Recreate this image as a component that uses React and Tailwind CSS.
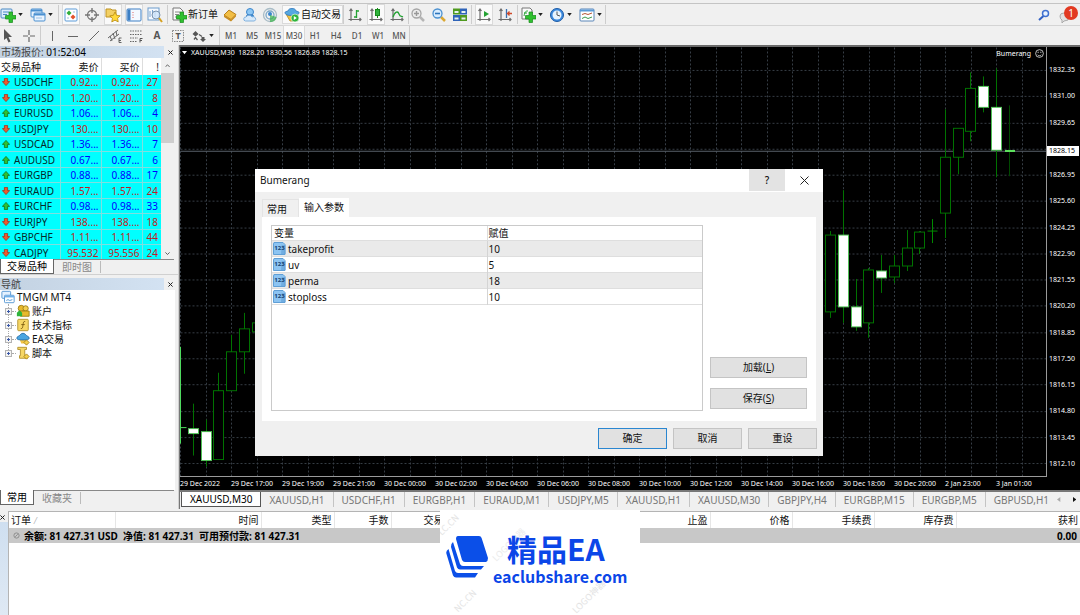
import React from "react";
import clsx from "clsx";

const quotes = [
  { symbol: "USDCHF", bid: "0.92...", ask: "0.92...", spread: 27, up: false },
  { symbol: "GBPUSD", bid: "1.20...", ask: "1.20...", spread: 8, up: false },
  { symbol: "EURUSD", bid: "1.06...", ask: "1.06...", spread: 4, up: true },
  { symbol: "USDJPY", bid: "130....", ask: "130....", spread: 10, up: false },
  { symbol: "USDCAD", bid: "1.36...", ask: "1.36...", spread: 7, up: true },
  { symbol: "AUDUSD", bid: "0.67...", ask: "0.67...", spread: 6, up: true },
  { symbol: "EURGBP", bid: "0.88...", ask: "0.88...", spread: 17, up: true },
  { symbol: "EURAUD", bid: "1.57...", ask: "1.57...", spread: 24, up: false },
  { symbol: "EURCHF", bid: "0.98...", ask: "0.98...", spread: 33, up: true },
  { symbol: "EURJPY", bid: "138....", ask: "138....", spread: 18, up: false },
  { symbol: "GBPCHF", bid: "1.11...", ask: "1.11...", spread: 44, up: false },
  { symbol: "CADJPY", bid: "95.532", ask: "95.556", spread: 24, up: false },
];

const prices = [
  "1832.35", "1831.00", "1829.65", "1828.30", "1826.95", "1825.60", "1824.25", "1822.90",
  "1821.55", "1820.20", "1818.85", "1817.50", "1816.15", "1814.80", "1813.45", "1812.10",
];

const times = [
  "29 Dec 2022", "29 Dec 17:00", "29 Dec 19:00", "29 Dec 21:00", "30 Dec 00:00", "30 Dec 02:00",
  "30 Dec 04:00", "30 Dec 06:00", "30 Dec 08:00", "30 Dec 10:00", "30 Dec 12:00", "30 Dec 14:00",
  "30 Dec 16:00", "30 Dec 18:00", "30 Dec 20:00", "2 Jan 23:00", "3 Jan 01:00",
];

const chartTabs = [
  "XAUUSD,M30", "XAUUSD,H1", "USDCHF,H1", "EURGBP,H1", "EURAUD,M1", "USDJPY,M5",
  "XAUUSD,H1", "XAUUSD,M30", "GBPJPY,H4", "EURGBP,M15", "EURGBP,M5", "GBPUSD,H1",
];

const timeframes = ["M1", "M5", "M15", "M30", "H1", "H4", "D1", "W1", "MN"];

const params = [
  { name: "takeprofit", value: "10" },
  { name: "uv", value: "5" },
  { name: "perma", value: "18" },
  { name: "stoploss", value: "10" },
];

// x, wick high, wick low, body top, body bottom, filled
const candles = [
  [193, 404, 456, 429, 434, true],
  [206, 420, 467, 432, 461, true],
  [218, 373, 460, 391, 460, false],
  [231, 335, 391, 352, 391, false],
  [244, 313, 374, 329, 352, false],
  [257, 323, 332, 323, 332, false],
  [830, 231, 318, 235, 312, false],
  [843, 190, 323, 235, 307, true],
  [856, 279, 331, 307, 327, true],
  [868, 268, 338, 270, 323, false],
  [881, 255, 293, 271, 278, true],
  [894, 255, 283, 266, 277, false],
  [907, 230, 271, 248, 266, false],
  [919, 231, 254, 232, 248, false],
  [932, 219, 243, 231, 231, false],
  [945, 109, 238, 157, 213, false],
  [958, 128, 174, 128, 157, false],
  [970, 72, 141, 88, 131, false],
  [983, 76, 112, 86, 107, true],
  [996, 68, 177, 107, 150, true],
];

const icon = (children) => (
  <svg viewBox="0 0 16 16" className="size-4 shrink-0" fill="none" aria-hidden="true">
    {children}
  </svg>
);

const plus = <path d="M9 5h3.500v3.500H16V12h-3.500v3.500H9V12H5.500V8.500H9z" fill="#2fc02f" stroke="#178a1b" strokeWidth=".7" />;
const axes = <path d="M4 2v12M1.500 12.500H14M2.500 4L4 2l1.500 2M12.500 11l1.500 1.500-1.500 1.500" stroke="#6b6b6b" strokeWidth="1.200" />;

const icons = {
  newChart: icon(<><rect x="1" y="2" width="11" height="9" rx="1" fill="#dcecfb" stroke="#4a8ac4" /><path d="M3 5h6M3 7.500h4" stroke="#4a8ac4" />{plus}</>),
  profiles: icon(<><rect x="1" y="2" width="11" height="8" rx="1" fill="#eaf4ff" stroke="#4a90d0" /><path d="M1 3.500h11" stroke="#4a90d0" strokeWidth="2" /><rect x="4" y="6" width="11" height="8" rx="1" fill="#eaf4ff" stroke="#4a90d0" /><path d="M4 7.500h11" stroke="#4a90d0" strokeWidth="2" /><path d="M6 11h6" stroke="#9bc0e4" /></>),
  market: icon(<><rect x="2" y="2" width="12" height="12" rx="1" fill="#fff" stroke="#5a9bd8" /><path d="M6 3.500l2.500 2.500L6 8.500 3.500 6z" fill="#2fae3a" /><path d="M10 7.500l2.500 2.500-2.500 2.500L7.500 10z" fill="#e2522c" /><path d="M10 5h2M4 11h2" stroke="#9bbbe0" /></>),
  crosshair: icon(<><circle cx="8" cy="8" r="4.500" stroke="#777" strokeWidth="1.300" /><path d="M8 1v5M8 10v5M1 8h5M10 8h5" stroke="#777" strokeWidth="1.400" /></>),
  navigator: icon(<><path d="M1 2h5l1 1h4v7H1z" fill="#f3d064" stroke="#bd9222" /><path d="M10 5l1.600 3.300 3.600.5-2.600 2.500.6 3.600-3.200-1.700-3.200 1.700.6-3.600-2.600-2.500 3.600-.5z" fill="#ffd83a" stroke="#b98a12" strokeWidth=".8" /></>),
  terminal: icon(<><rect x="1" y="2" width="14" height="12" rx="1" fill="#f4f9ff" stroke="#3c7fc4" /><rect x="1.500" y="2.500" width="3" height="11" fill="#3c7fc4" /><path d="M6.500 5.500h1M6.500 8h1M6.500 10.500h1" stroke="#d66" /></>),
  tester: icon(<><rect x="1" y="1" width="11" height="12" fill="#f4f9ff" stroke="#6c9ccc" /><path d="M3 4v6M5.500 3v6M8 5v5" stroke="#7aa4d0" /><circle cx="9" cy="8" r="4" fill="#cfe5fa" fillOpacity=".8" stroke="#7b93ad" /><path d="M12 11l3 4" stroke="#d5a021" strokeWidth="2" /></>),
  order: icon(<><path d="M2 1h7l3 3v9H2z" fill="#fafafa" stroke="#777" /><path d="M4 5h5M4 7.500h4M4 10h2" stroke="#888" />{plus}</>),
  editor: icon(<><path d="M2 8l5-5 7 4.500-5 5z" fill="#f2be45" stroke="#b9801a" /><path d="M2 8l7 4.500v2L2 10zM9 12.500l5-5v2l-5 5z" fill="#c88d22" /></>),
  community: icon(<><circle cx="8" cy="5" r="3.500" fill="#8ec7f4" stroke="#3c86cc" /><path d="M5 8h6l1 3H4z" fill="#5aa4e6" stroke="#2d75bb" /><path d="M3.500 14a2 2 0 0 1 .5-4 3.500 3.500 0 0 1 6 0 2 2 0 1 1 2.500 4z" fill="#d7e9fa" stroke="#6aa3d8" strokeWidth=".8" /></>),
  signals: icon(<><circle cx="8" cy="8" r="6.500" stroke="#a9bcc6" strokeWidth="1.300" /><circle cx="8" cy="8" r="4" stroke="#7fa9c8" strokeWidth="1.300" /><circle cx="8" cy="7" r="2" fill="#3c86cc" /><path d="M8 8v7c4 0 6-2 6.500-5z" fill="#39b24a" fillOpacity=".7" /></>),
  auto: icon(<><path d="M2 7c3 2 9 2 12 0l-3 7H6z" fill="#f2c343" stroke="#b98a1c" strokeWidth=".8" /><path d="M1 5.500c0-1 2-1 3-1.500.5-2 2-2.500 4-2.500s3.500.5 4 2.500c1 .5 3 .5 3 1.500C15 8 11 8.500 8 8.500S1 8 1 5.500z" fill="#56a8e0" stroke="#2d75bb" strokeWidth=".8" /><circle cx="11" cy="11" r="4" fill="#2fb43c" stroke="#fff" strokeWidth=".6" /><path d="M9.800 9l3 2-3 2z" fill="#fff" /></>),
  bars: icon(<>{axes}<path d="M9.500 3v8M9.500 4h2.500M7 10h2.500" stroke="#24a233" strokeWidth="1.300" /></>),
  candle: icon(<>{axes}<path d="M9.500 1v10" stroke="#178a1b" /><rect x="7.500" y="2.500" width="4" height="6" fill="#2fb43c" stroke="#178a1b" /></>),
  line: icon(<>{axes}<path d="M4 10c2-6 5-6 6-3s2 2 4 3" stroke="#24a233" strokeWidth="1.300" /></>),
  zoomIn: icon(<><path d="M10 10l4 4" stroke="#b5b5b5" strokeWidth="2.500" /><circle cx="6.500" cy="6.500" r="4.500" fill="#ececec" stroke="#a5a5a5" strokeWidth="1.300" /><path d="M4 6.500h5M6.500 4v5" stroke="#999" strokeWidth="1.400" /></>),
  zoomOut: icon(<><path d="M10 10l4 4" stroke="#dba832" strokeWidth="2.500" /><circle cx="6.500" cy="6.500" r="4.500" fill="#d9edff" stroke="#4a90d0" strokeWidth="1.300" /><path d="M4 6.500h5" stroke="#2d75bb" strokeWidth="1.600" /></>),
  tile: icon(<><path d="M1 1.500h7v6H1zM8 8h7v6H8z" fill="#4f9a1e" /><path d="M8 1.500h7v6H8zM1 8h7v6H1z" fill="#2e63b8" /><path d="M2.500 4h4v2h-4zM9.500 4h4v2h-4zM2.500 10.500h4v2h-4zM9.500 10.500h4v2h-4z" fill="#e6f2ee" /></>),
  scroll: icon(<>{axes}<path d="M8 4l5 3-5 3z" fill="#24a233" /></>),
  shift: icon(<>{axes}<path d="M9.500 2v9" stroke="#3a6fb0" strokeWidth="1.300" /><path d="M15 6.500h-4m1.500-2l-2 2 2 2" stroke="#d04a2a" strokeWidth="1.300" /></>),
  indicators: icon(<><path d="M2 1h8l2 2v9H2z" fill="#fafafa" stroke="#777" /><path d="M4 9c1-5 2-5 4-5M4 6h3" stroke="#24a233" />{plus}</>),
  clock: icon(<><circle cx="8" cy="8" r="6.500" fill="#3d8be0" stroke="#1d5ba6" /><circle cx="8" cy="8" r="4.500" fill="#e9f4ff" /><path d="M8 4.500V8l3 1" stroke="#555" /></>),
  template: icon(<><rect x="1" y="2" width="14" height="12" rx="1" fill="#fff" stroke="#5a86b8" /><path d="M1 3.500h14" stroke="#5a9bd8" strokeWidth="2" /><path d="M3 7.500l3-1 3 1 4-1.500" stroke="#b55434" /><path d="M3 11.500l3-1.500 3 1.500 4-1.500" stroke="#3a9a4c" /></>),
  cursor: icon(<path d="M4 1l8 8H8.500l2 4.500-2 .9-2-4.500L4 12z" fill="#555" />),
  cross: icon(<path d="M8 2v5M8 9v5M2 8h5M9 8h5" stroke="#666" strokeWidth="1.200" />),
  vline: icon(<path d="M8.500 3v10" stroke="#666" />),
  hline: icon(<path d="M3 8.500h10" stroke="#666" />),
  trend: icon(<path d="M3 13L13 3" stroke="#666" />),
  channel: icon(<><path d="M1 10L11 2M3 13l9-7M3 8l2 5M6 5l2 6M9 3l1 5" stroke="#666" /><path d="M14.500 10H12v4.500h2.500M12 12.500h2" stroke="#555" strokeWidth=".9" /></>),
  fibo: icon(<><path d="M2 3h12M2 6.500h12M2 10h8M2 13.500h7" stroke="#666" strokeDasharray="1.500 1" /><path d="M14.500 10.500H12v4M12 12.500h2" stroke="#555" /></>),
  label: icon(<rect x="2.500" y="2.500" width="11" height="11" stroke="#888" strokeDasharray="1.500 1" />),
  arrows: icon(<><path d="M1.500 6L4.500 3l3 3-3 2.500zM9 11h6l-3 3zM8 8.500l3 2" fill="#555" /><path d="M3 11.500l1.500-2 2 2.500M8 6.500l3 2" stroke="#555" strokeWidth="1.300" /><path d="M10.500 9h3v2h-3z" fill="#555" /></>),
};

const Tool = ({ name, label, pressed }) => (
  <button
    type="button"
    aria-label={label || name}
    className={clsx("h-[19px] flex items-center shrink-0", pressed && "bg-[#fafafa] ring-1 ring-[#dadada]")}
  >
    {icons[name]}
  </button>
);

const Caret = ({ label }) => (
  <button type="button" aria-label={label} className="w-2 h-4 flex items-center justify-center">
    <svg viewBox="0 0 6 4" className="w-[5px] h-[3px]" aria-hidden="true">
      <path d="M0 0h6L3 4z" fill="#222" />
    </svg>
  </button>
);

const Group = ({ children, className }) => (
  <div className={clsx("h-[19px] flex items-center border-r border-[#cdcdcd]", className)}>{children}</div>
);

const TopBar = () => (
  <header className="bg-[#f0f0f0]">
    <div className="h-1 border-b border-[#c4c4c4]" />
    <div className="h-[21px] flex items-center">
      <Group className="gap-[5px] pr-1">
        <div className="flex items-center"><Tool name="newChart" /><Caret label="newChart menu" /></div>
        <div className="flex items-center ml-px"><Tool name="profiles" /><Caret label="profiles menu" /></div>
      </Group>
      <Group className="gap-[5px] px-1">
        <Tool name="market" pressed />
        <Tool name="crosshair" />
        <Tool name="navigator" pressed />
        <Tool name="terminal" pressed />
        <Tool name="tester" />
      </Group>
      <Group className="gap-1 pl-[3px]">
        <button type="button" className="flex items-center gap-px text-[10px] whitespace-nowrap">{icons.order}新订单</button>
        <Tool name="editor" />
        <Tool name="community" />
        <Tool name="signals" />
        <button type="button" className="h-[19px] pl-px pr-px flex items-center gap-px text-[10px] whitespace-nowrap bg-[#fafafa] border border-[#dadada]">
          {icons.auto}自动交易
        </button>
      </Group>
      <Group className="gap-[5px] px-[3px]">
        <Tool name="bars" />
        <Tool name="candle" pressed />
        <Tool name="line" />
      </Group>
      <Group className="gap-[5px] pl-px pr-[3px]">
        <Tool name="zoomIn" />
        <Tool name="zoomOut" />
        <Tool name="tile" />
      </Group>
      <Group className="gap-[5px] px-1">
        <Tool name="scroll" pressed />
        <Tool name="shift" />
      </Group>
      <Group className="gap-[5px] px-[2px]">
        <div className="flex items-center"><Tool name="indicators" /><Caret label="indicators menu" /></div>
        <div className="flex items-center"><Tool name="clock" /><Caret label="periods menu" /></div>
        <div className="flex items-center ml-px"><Tool name="template" /><Caret label="templates menu" /></div>
      </Group>
      <div className="ml-auto flex items-center gap-2 pr-[2px]">
        <button type="button" aria-label="search">
          <svg viewBox="0 0 12 12" className="size-3" fill="none" aria-hidden="true">
            <path d="M5.500 7L1 11" stroke="#2f5fc4" strokeWidth="2" />
            <circle cx="7.500" cy="4.500" r="3" stroke="#3f70d0" strokeWidth="1.500" fill="#e8f2ff" />
          </svg>
        </button>
        <button type="button" aria-label="notifications" className="relative size-5">
          <svg viewBox="0 0 20 20" className="size-5" aria-hidden="true">
            <path d="M2 11q0-3 4-3h4v7l-4 1-2 2v-3q-2-1-2-4z" fill="#e2e2e2" stroke="#aaa" />
          </svg>
          <span className="absolute right-0 top-px size-[14px] rounded-full bg-[#e23a22] text-white text-[10px] leading-[14px] text-center">1</span>
        </button>
      </div>
    </div>
    <div className="h-5 flex items-center border-t border-[#d4d4d4]">
      <Group className="gap-[5px] pr-[3px]">
        <Tool name="cursor" />
        <Tool name="cross" />
      </Group>
      <Group className="gap-[5px] pl-[3px] pr-1">
        <Tool name="vline" />
        <Tool name="hline" />
        <Tool name="trend" />
        <Tool name="channel" />
        <Tool name="fibo" />
        <button type="button" className="w-4 text-[10px] font-bold text-[#555]">A</button>
        <button type="button" className="relative text-[#555]">
          {icons.label}
          <span className="absolute inset-0 text-[9px] leading-4 font-bold text-center">T</span>
        </button>
        <div className="flex items-center"><Tool name="arrows" /><Caret label="arrows menu" /></div>
      </Group>
      <Group className="gap-px pl-px">
        {timeframes.map((tf) => (
          <button
            type="button"
            key={tf}
            className={clsx("w-5 h-[19px] text-[8px] font-medium text-[#555]", tf === "M30" && "bg-[#fafafa] ring-1 ring-[#dadada]")}
          >
            {tf}
          </button>
        ))}
      </Group>
    </div>
  </header>
);

const Arrow = ({ up }) => (
  <svg viewBox="0 0 10 10" className={clsx("size-2 shrink-0", !up && "rotate-180")} aria-hidden="true">
    <path d="M5 .5L9.500 5.500H7v4H3v-4H.5z" fill={up ? "#2fc02f" : "#f0592b"} stroke={up ? "#14701a" : "#a3301a"} />
  </svg>
);

const PanelTitle = ({ children }) => (
  <div className="h-3 flex items-center justify-between pr-[2px] text-[10px] leading-3">
    <h2 className="flex-1 pl-px bg-gradient-to-r from-[#c3d2e2] to-[#d3e2f2] text-[#444]">{children}</h2>
    <CloseX />
  </div>
);

const CloseX = () => (
  <button type="button" aria-label="close" className="w-3 h-3 flex items-center justify-center">
    <svg viewBox="0 0 6 6" className="size-[5px]" aria-hidden="true">
      <path d="M.5.5l5 5M5.500.5l-5 5" stroke="#222" strokeWidth="1.200" />
    </svg>
  </button>
);

const PanelTabs = ({ active, other }) => (
  <div className="h-[15px] flex items-center text-[10px] leading-[14px] border-t border-[#888] mr-1">
    <button type="button" className="h-[15px] -mt-px px-[6px] bg-white border border-t-0 border-[#666] text-black">{active}</button>
    <button type="button" className="px-2 border-r border-[#bbb] text-[#888] leading-3">{other}</button>
  </div>
);

const MarketWatch = () => (
  <section className="pt-px">
    <PanelTitle>市场报价: <span className="text-black">01:52:04</span></PanelTitle>
    <div className="h-[201px] flex overflow-hidden bg-white mr-1">
      <div className="flex-1">
        <table className="w-full h-[203px] table-fixed border-collapse text-[10px] leading-[14px]">
          <thead>
            <tr className="bg-white">
              <th className="h-[17px] w-[60px] p-0 pl-px font-normal text-left">交易品种</th>
              <th className="w-[41px] p-0 pr-[2px] font-normal text-right border-r border-[#ddd]">卖价</th>
              <th className="w-[41px] p-0 pr-[2px] font-normal text-right border-r border-[#ddd]">买价</th>
              <th className="p-0 pr-[2px] font-normal text-right">!</th>
            </tr>
          </thead>
          <tbody>
            {quotes.map((q) => (
              <tr key={q.symbol} className={clsx("bg-[#00ffff] border-b border-[#7fdfdf]", q.up ? "text-[#0000ff]" : "text-[#c01c24]")}>
                <td className="p-0 border-r border-[#7fdfdf] text-[#062a2a]">
                  <div className="flex items-center gap-1 pl-[2px]"><Arrow up={q.up} />{q.symbol}</div>
                </td>
                <td className="p-0 pr-[2px] text-right border-r border-[#7fdfdf]">{q.bid}</td>
                <td className="p-0 pr-[2px] text-right border-r border-[#7fdfdf]">{q.ask}</td>
                <td className="p-0 pr-[3px] text-right">{q.spread}</td>
              </tr>
            ))}
          </tbody>
        </table>
      </div>
      <div className="w-[13px] flex flex-col items-center justify-between bg-[#f0f0f0]">
        <svg viewBox="0 0 6 4" className="w-[5px] mt-[6px] mb-[6px]" fill="none" aria-hidden="true"><path d="M.5 3.500L3 1l2.500 2.500" stroke="#444" /></svg>
        <div className="w-full h-[70px] bg-[#cdcdcd]" />
        <div className="flex-1" />
        <svg viewBox="0 0 6 4" className="w-[5px] mb-1" fill="none" aria-hidden="true"><path d="M.5.5L3 3 5.500.5" stroke="#444" /></svg>
      </div>
    </div>
    <PanelTabs active="交易品种" other="即时图" />
  </section>
);

const treeItems = [
  {
    label: "账户",
    art: <><circle cx="6" cy="5" r="3.500" fill="#e8b92c" stroke="#9c7a14" /><circle cx="11" cy="5" r="3" fill="#f3cf50" stroke="#9c7a14" /><path d="M5 8h10v6H5z" fill="#e8b92c" stroke="#9c7a14" /><path d="M1 10l3-3 3 3v4H1z" fill="#2fb43c" /></>,
  },
  {
    label: "技术指标",
    art: <><rect x="2" y="1.500" width="12" height="13" rx="1" fill="#f6d766" stroke="#b08f2a" /><path d="M10.500 4c-2-.5-2 1-2.500 4s-.5 4.500-2.500 4M6 7.500h4" stroke="#7a5a10" /></>,
  },
  {
    label: "EA交易",
    art: <><path d="M4 8h8l-2 5H6z" fill="#f2c343" /><path d="M1 7c0-2 2-2 3-3s2-2.500 4-2.500S11 3 12 4s3 1 3 3-3 2-7 2-7 0-7-2z" fill="#4aa5e0" stroke="#236ca8" /><path d="M12 9l3 3-3 3-3-3z" fill="#f5d04c" stroke="#a5801a" /></>,
  },
  {
    label: "脚本",
    art: <><path d="M2 1.500h10V4h-2v7h3v3H4v-3h1V4H2z" fill="#f6d766" stroke="#b08f2a" /><path d="M12 9l3 3-3 3-3-3z" fill="#f5d04c" stroke="#a5801a" /></>,
  },
];

const Navigator = () => (
  <section className="flex-1 flex flex-col pt-[3px] border-t border-[#d0d0d0]">
    <PanelTitle>导航</PanelTitle>
    <div className="flex-1 bg-white mr-[3px] text-[10px] leading-[14px] text-[#111]">
      <div className="h-[14px] flex items-center gap-[2px] pl-px">
        <svg viewBox="0 0 16 16" className="size-[14px]" fill="none" aria-hidden="true">
          <rect x="1" y="1.500" width="10" height="8" rx="1" fill="#e3f1ff" stroke="#4a90d0" />
          <rect x="4" y="6" width="11" height="8.500" rx="1" fill="#fff" stroke="#4a90d0" />
          <path d="M4 7.500h11" stroke="#6fb0ea" strokeWidth="2" />
          <path d="M6 12l2-1 2 1 3-1" stroke="#4a90d0" />
        </svg>
        TMGM MT4
      </div>
      <ul className="ml-2 border-l border-dotted border-[#aaa] h-12">
        {treeItems.map((item) => (
          <li key={item.label} className="h-[14px] flex items-center -ml-1 whitespace-nowrap">
            <button type="button" aria-label={item.label} className="size-[7px] bg-[#f4f4f4] border border-[#b4b4b4]">
              <svg viewBox="0 0 5 5" className="size-[5px]" aria-hidden="true"><path d="M1 2.500h3M2.500 1v3" stroke="#3a58a8" /></svg>
            </button>
            <span className="w-1 border-t border-dotted border-[#aaa]" />
            <svg viewBox="0 0 16 16" className="size-[14px] mr-[2px]" fill="none" aria-hidden="true">{item.art}</svg>
            {item.label}
          </li>
        ))}
      </ul>
    </div>
    <PanelTabs active="常用" other="收藏夹" />
  </section>
);

const Candle = ({ data }) => {
  const [x, high, low, top, bottom, filled] = data;
  if (top === bottom) {
    return <path d={`M${x} ${high}V${low}M${x - 5} ${top}h10`} stroke="#008a00" />;
  }
  return (
    <g stroke="#007200">
      <path d={`M${x} ${high}V${low}`} />
      <rect x={x - 5} y={top} width="10" height={bottom - top} fill={filled ? "#fff" : "#000"} stroke={filled ? "#4fbf55" : "#007200"} />
    </g>
  );
};

const Plot = () => (
  <svg viewBox="179.500 46.500 866 430" preserveAspectRatio="none" className="absolute inset-0 size-full" fill="none" shapeRendering="crispEdges">
    <g stroke="#363d45" strokeDasharray="2 2">
      {prices.map((p, i) => (
        <path key={p} d={`M180 ${Math.round(70 + i * 26.27)}H1046`} />
      ))}
      {times.map((t, i) => (
        <path key={t} d={`M${180 + i * 51} 47V477M${206 + i * 51} 47V477`} />
      ))}
    </g>
    <path d="M180 151H1046" stroke="#59626b" />
    <path d="M180 347V444M180 428h6" stroke="#4fdc5f" />
    {candles.map((c) => (
      <Candle key={c[0]} data={c} />
    ))}
    <path d="M1009 105V176" stroke="#004a00" />
    <path d="M1004 151h10" stroke="#5de05d" strokeWidth="2" />
  </svg>
);

const ParamIcon = () => (
  <span className="relative size-[13px] shrink-0">
    <svg viewBox="0 0 13 13" className="size-[13px]" aria-hidden="true">
      <path d="M1 .5h9l2 2v10H.5V2z" fill="#8cc4f2" stroke="#5f9fd6" />
      <path d="M9 .5V3h3.500v9H8z" fill="#5f9fd6" fillOpacity=".6" />
    </svg>
    <span className="absolute inset-0 text-[6px] leading-[13px] font-bold text-center text-[#173f70]">123</span>
  </span>
);

const DialogButton = ({ children, primary, className }) => (
  <button
    type="button"
    className={clsx("h-[21px] text-[10px] bg-[#e1e1e1] border", primary ? "border-[#2a86d0]" : "border-[#c4c4c4]", className)}
  >
    {children}
  </button>
);

const ParamsDialog = () => (
  <div role="dialog" aria-label="Bumerang" className="absolute left-[75px] top-[124px] w-[568px] bg-[#f0f0f0] text-[#111] text-[10px]">
    <div className="h-[23px] pl-[5px] flex items-center bg-white">
      <h1 className="flex-1 text-[10px]">Bumerang</h1>
      <button type="button" className="w-9 h-[22px] self-start bg-[#e3e3e3] font-medium">?</button>
      <button type="button" aria-label="close dialog" className="w-[38px] h-[22px] flex items-center justify-center">
        <svg viewBox="0 0 9 9" className="size-[9px]" aria-hidden="true"><path d="M.5.5l8 8M8.500.5l-8 8" stroke="#222" /></svg>
      </button>
    </div>
    <div className="pt-[6px] px-[7px] pb-[7px]">
      <div className="h-[19px] flex items-end">
        <button type="button" className="w-[37px] h-[18px] text-left pl-1 border border-b-0 border-[#e4e4e4] leading-[18px]">常用</button>
        <button type="button" className="w-[50px] h-[19px] bg-white">输入参数</button>
      </div>
      <div className="flex bg-white pt-2 pb-[10px] pl-[9px] pr-[9px]">
        <div className="flex-1 h-[186px] border border-[#cacaca]">
          <table className="w-full h-[79px] table-fixed border-collapse leading-[14px]">
            <thead>
              <tr>
                <th className="w-1/2 p-0 pl-[2px] text-left font-normal border-r border-[#ddd]">变量</th>
                <th className="p-0 pl-px text-left font-normal">赋值</th>
              </tr>
            </thead>
            <tbody>
              {params.map((p) => (
                <tr key={p.name} className="border-y border-[#dedede] odd:bg-[#eaeaea]">
                  <td className="p-0 border-r border-[#d4d4d4]">
                    <div className="flex items-center gap-[2px] pl-px"><ParamIcon />{p.name}</div>
                  </td>
                  <td className="p-0 pl-px">{p.value}</td>
                </tr>
              ))}
            </tbody>
          </table>
        </div>
        <div className="w-[97px] ml-[7px] pb-[2px] flex flex-col justify-end gap-[10px]">
          <DialogButton>加载(<u>L</u>)</DialogButton>
          <DialogButton>保存(<u>S</u>)</DialogButton>
        </div>
      </div>
      <div className="mt-[7px] -mr-px flex justify-end gap-[6px]">
        <DialogButton primary className="w-[69px]">确定</DialogButton>
        <DialogButton className="w-[69px]">取消</DialogButton>
        <DialogButton className="w-[69px]">重设</DialogButton>
      </div>
    </div>
  </div>
);

const Chart = () => (
  <main className="relative flex-1 min-w-0 flex flex-col border-l border-[#777]">
    <div className="flex-1 flex flex-col bg-black border-t-2 border-[#6a6a6a] text-white text-[7px] leading-[8px]">
      <div className="flex-1 flex">
        <div className="relative flex-1 border-r border-b border-[#9a9a9a]">
          <Plot />
          <div className="absolute left-[2px] top-[2px] flex items-center gap-1 whitespace-pre">
            <svg viewBox="0 0 6 4" className="w-[5px]" aria-hidden="true"><path d="M0 0h6L3 4z" fill="#fff" /></svg>
            XAUUSD,M30  1828.20 1830.56 1826.89 1828.15
          </div>
          <div className="absolute right-[2px] top-[2px] flex items-center gap-1">
            Bumerang
            <svg viewBox="0 0 10 10" className="size-[9px]" fill="none" stroke="#fff" aria-hidden="true">
              <circle cx="5" cy="5" r="4.300" strokeWidth=".8" />
              <path d="M3.500 3v1.500M6.500 3v1.500M3 6.500c1 1.300 3 1.300 4 0" strokeWidth=".8" />
            </svg>
          </div>
        </div>
        <div className="relative w-[33px] pt-[19px] pb-[9px] pl-[2px] flex flex-col justify-between">
          {prices.map((p) => (
            <span key={p}>{p}</span>
          ))}
          <span className="absolute left-0 right-px top-[99px] h-[10px] pl-[2px] bg-white text-black leading-[10px]">1828.15</span>
        </div>
      </div>
      <div className="h-[13px] flex items-center pr-[33px]">
        {times.map((t) => (
          <span key={t} className="flex-1 basis-0 min-w-0 whitespace-nowrap">{t}</span>
        ))}
      </div>
    </div>
    <div className="h-[19px] pb-[2px] flex items-stretch bg-[#f0f0f0] border-t-2 border-[#777] pl-px text-[10px] leading-[14px] text-[#777]">
      {chartTabs.map((t, i) => (
        <button
          type="button"
          key={i}
          className={clsx("whitespace-nowrap shrink-0", i === 0 ? "px-2 bg-white text-black border border-t-0 border-[#555]" : "px-2 border-r border-[#c4c4c4] last-of-type:border-0")}
        >
          {t}
        </button>
      ))}
      <div className="ml-auto pr-1 flex items-center gap-3">
        <svg viewBox="0 0 4 6" className="h-[5px]" aria-hidden="true"><path d="M4 0v6L0 3z" fill="#aaa" /></svg>
        <svg viewBox="0 0 4 6" className="h-[5px]" aria-hidden="true"><path d="M0 0v6l4-3z" fill="#111" /></svg>
      </div>
    </div>
    <ParamsDialog />
  </main>
);

const columns = [
  { label: "订单", width: "w-[106px]" },
  { label: "时间", width: "w-[146px]" },
  { label: "类型", width: "w-[73px]" },
  { label: "手数", width: "w-[57px]" },
  { label: "交易品种", width: "w-[75px]" },
  { label: "", width: "w-[81px]" },
  { label: "", width: "w-[81px]" },
  { label: "止盈", width: "w-[82px]" },
  { label: "价格", width: "w-[82px]" },
  { label: "手续费", width: "w-[82px]" },
  { label: "库存费", width: "w-[82px]" },
  { label: "获利", width: "w-auto" },
];

const Logo = () => (
  <div className="absolute left-[431px] -top-[2px] bottom-0 w-[200px] overflow-hidden bg-white text-[#0b46e8] font-['Noto_Sans_CJK_SC',sans-serif]">
    <span className="absolute -left-1 top-2 -rotate-45 text-[9px] text-[#e4e4e4]">LC.CN</span>
    <span className="absolute left-12 top-7 -rotate-45 text-[9px] text-[#ececec] whitespace-nowrap">LOGO神器</span>
    <span className="absolute left-3 top-[84px] -rotate-45 text-[9px] text-[#e4e4e4]">NC.CN</span>
    <span className="absolute left-32 top-[80px] -rotate-45 text-[9px] text-[#e4e4e4] whitespace-nowrap">LOGO神器</span>
    <div className="relative flex pt-[18px] pl-[6px]">
      <svg viewBox="0 0 42 44" className="w-[42px] h-[44px] mt-[7px]" fill="#0b4fe8" aria-hidden="true">
        <path d="M12 1h21q2 0 2.600 2L42 23q0 3-2 4H19q-2 0-3-2L10 4q0-3 2-3z" />
        <path d="M7 7l7 22q1 2 3 2h21l-3 3.500H14q-2 0-3-2L5 12q-.5-3 2-5z" />
        <path d="M2.500 14L9 36q1 2 3 2h20l-3 4.500H10q-2 0-3-2L.5 19q-1-3 2-5z" />
      </svg>
      <div className="pl-[5px] flex flex-col">
        <strong className="pl-[14px] text-[30px] leading-[40px] whitespace-nowrap">精品EA</strong>
        <strong className="text-[16px] leading-4">eaclubshare.com</strong>
      </div>
    </div>
  </div>
);

const Terminal = () => (
  <footer className="h-[104px] flex bg-[#f0f0f0] text-[10px] leading-[14px]">
    <div className="w-2 flex flex-col overflow-hidden">
      <div className="h-[11px] -ml-1"><CloseX /></div>
      <div className="flex-1 bg-gradient-to-b from-[#cfdff0] to-[#dfe9f4]" />
    </div>
    <div className="relative flex-1 bg-white border-t border-l border-[#b4b4b4]">
      <table className="w-full table-fixed border-collapse">
        <thead>
          <tr>
            {columns.map((c, i) => (
              <th key={i} className={clsx("h-4 p-0 px-[2px] font-normal border-r border-[#e6e6e6] last:border-0 whitespace-nowrap", c.width, i === 0 ? "text-left" : "text-right")}>
                {c.label}
                {i === 0 && <span className="pl-1 text-[#aaa] text-[8px]">⁄</span>}
              </th>
            ))}
          </tr>
        </thead>
        <tbody>
          <tr className="bg-[#c8c8c8] font-bold text-black">
            <td colSpan={11} className="h-[15px] p-0">
              <div className="flex items-center gap-1 pl-1 whitespace-pre">
                <svg viewBox="0 0 8 8" className="size-[7px]" fill="none" stroke="#888" aria-hidden="true"><circle cx="4" cy="4" r="3" /><path d="M2.500 5.500l3-3" /></svg>
                余额: 81 427.31 USD  净值: 81 427.31  可用预付款: 81 427.31
              </div>
            </td>
            <td className="p-0 pr-[3px] text-right">0.00</td>
          </tr>
        </tbody>
      </table>
      <Logo />
    </div>
  </footer>
);

const App = () => {
  return (
    <div className="min-h-screen flex flex-col bg-[#f0f0f0] text-[#111] font-['Noto_Sans','Noto_Sans_CJK_SC',sans-serif] overflow-hidden">
      <TopBar />
      <div className="flex-1 flex">
        <aside className="w-[179px] shrink-0 flex flex-col border-r border-[#d0d0d0]">
          <MarketWatch />
          <Navigator />
          <div className="h-1" />
        </aside>
        <Chart />
      </div>
      <div className="h-[2px]" />
      <Terminal />
    </div>
  );
};

export default App;
